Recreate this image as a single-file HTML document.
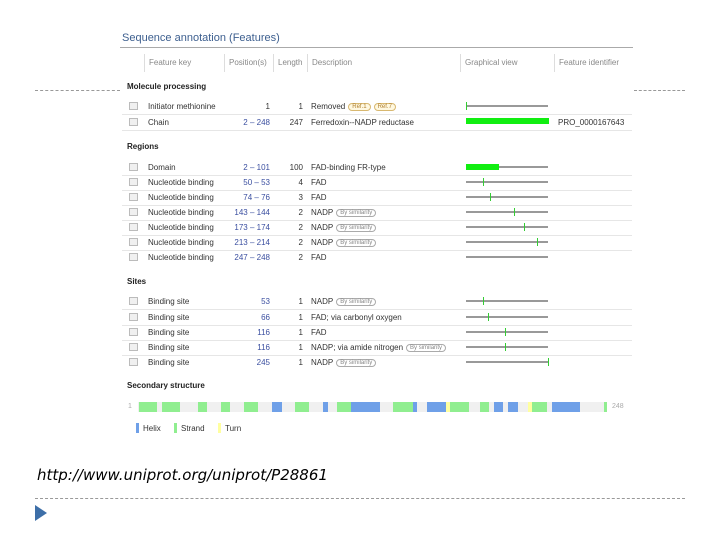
<!DOCTYPE html><html><head><style>
body{margin:0;width:720px;height:540px;background:#fff;position:relative;overflow:hidden;font-family:"Liberation Sans",sans-serif;font-size:8px;color:#333}
div,span{position:absolute;white-space:nowrap}
.t{font-size:11px;color:#3d5f8f;left:122px;top:32px}
.h{color:#888;top:58px}
.sec{font-weight:bold;color:#222;left:127px}
.row{left:122px;width:510px;height:15px;border-bottom:1px solid #e6e6e6}
.cb{left:7px;top:3px;width:7px;height:6px;border:1px solid #bbb;background:#f0f0f0}
.k{left:26px;top:3px}.p{right:362px;top:3px;color:#3b4fa0}.l{right:329px;top:3px}.d{left:189px;top:3px}
.g{left:344px;top:6px;width:82px;height:2px;background:#999}
.m{top:-3px;width:1px;height:8px;background:#3c3}
.sim{position:relative;display:inline-block;font-size:6px;color:#888;border:1px solid #aaa;border-radius:5px;padding:0 3px;margin-left:3px;vertical-align:1px}
.ref{position:relative;display:inline-block;font-size:6px;color:#b08030;border:1px solid #d8b870;background:#fff8e0;border-radius:5px;padding:0 3px;margin-left:3px;vertical-align:1px}
.dash{height:0;border-top:1px dashed #999}
.vl{top:54px;width:1px;height:18px;background:#ddd}
</style></head><body>
<div class="t">Sequence annotation (Features)</div>
<div style="left:120px;top:47px;width:513px;height:1px;background:#aaa"></div>
<div class="vl" style="left:144px"></div><div class="vl" style="left:224px"></div><div class="vl" style="left:273px"></div><div class="vl" style="left:307px"></div><div class="vl" style="left:460px"></div><div class="vl" style="left:554px"></div>
<div class="h" style="left:149px">Feature key</div><div class="h" style="left:229px">Position(s)</div><div class="h" style="left:278px">Length</div><div class="h" style="left:312px">Description</div><div class="h" style="left:465px">Graphical view</div><div class="h" style="left:559px">Feature identifier</div>
<div class="dash" style="left:35px;top:90px;width:85px"></div><div class="dash" style="left:634px;top:90px;width:51px"></div>
<div class="sec" style="top:82px">Molecule processing</div>
<div class="row" style="top:99px"><div class="cb"></div><div class="k">Initiator methionine</div><div class="p" style="color:#333">1</div><div class="l">1</div><div class="d">Removed<span class="ref">Ref.1</span><span class="ref">Ref.7</span></div><div class="g"><div class="m" style="left:0"></div></div></div>
<div class="row" style="top:115px"><div class="cb"></div><div class="k">Chain</div><div class="p">2 – 248</div><div class="l">247</div><div class="d">Ferredoxin--NADP reductase</div><div style="left:344px;top:3px;width:83px;height:6px;background:#1e1"></div><div style="left:436px;top:3px">PRO_0000167643</div></div>
<div class="sec" style="top:142px">Regions</div>
<div class="row" style="top:160px"><div class="cb"></div><div class="k">Domain</div><div class="p">2 – 101</div><div class="l">100</div><div class="d">FAD-binding FR-type</div><div class="g"><div style="left:0;top:-2px;width:33px;height:6px;background:#1e1"></div></div></div>
<div class="row" style="top:175px"><div class="cb"></div><div class="k">Nucleotide binding</div><div class="p">50 – 53</div><div class="l">4</div><div class="d">FAD</div><div class="g"><div class="m" style="left:17px"></div></div></div>
<div class="row" style="top:190px"><div class="cb"></div><div class="k">Nucleotide binding</div><div class="p">74 – 76</div><div class="l">3</div><div class="d">FAD</div><div class="g"><div class="m" style="left:24px"></div></div></div>
<div class="row" style="top:205px"><div class="cb"></div><div class="k">Nucleotide binding</div><div class="p">143 – 144</div><div class="l">2</div><div class="d">NADP<span class="sim">By similarity</span></div><div class="g"><div class="m" style="left:48px"></div></div></div>
<div class="row" style="top:220px"><div class="cb"></div><div class="k">Nucleotide binding</div><div class="p">173 – 174</div><div class="l">2</div><div class="d">NADP<span class="sim">By similarity</span></div><div class="g"><div class="m" style="left:58px"></div></div></div>
<div class="row" style="top:235px"><div class="cb"></div><div class="k">Nucleotide binding</div><div class="p">213 – 214</div><div class="l">2</div><div class="d">NADP<span class="sim">By similarity</span></div><div class="g"><div class="m" style="left:71px"></div></div></div>
<div class="row" style="top:250px;border:0"><div class="cb"></div><div class="k">Nucleotide binding</div><div class="p">247 – 248</div><div class="l">2</div><div class="d">FAD</div><div class="g"></div></div>
<div class="sec" style="top:277px">Sites</div>
<div class="row" style="top:294px"><div class="cb"></div><div class="k">Binding site</div><div class="p">53</div><div class="l">1</div><div class="d">NADP<span class="sim">By similarity</span></div><div class="g"><div class="m" style="left:17px"></div></div></div>
<div class="row" style="top:310px"><div class="cb"></div><div class="k">Binding site</div><div class="p">66</div><div class="l">1</div><div class="d">FAD; via carbonyl oxygen</div><div class="g"><div class="m" style="left:22px"></div></div></div>
<div class="row" style="top:325px"><div class="cb"></div><div class="k">Binding site</div><div class="p">116</div><div class="l">1</div><div class="d">FAD</div><div class="g"><div class="m" style="left:39px"></div></div></div>
<div class="row" style="top:340px"><div class="cb"></div><div class="k">Binding site</div><div class="p">116</div><div class="l">1</div><div class="d">NADP; via amide nitrogen<span class="sim">By similarity</span></div><div class="g"><div class="m" style="left:39px"></div></div></div>
<div class="row" style="top:355px;border:0"><div class="cb"></div><div class="k">Binding site</div><div class="p">245</div><div class="l">1</div><div class="d">NADP<span class="sim">By similarity</span></div><div class="g"><div class="m" style="left:82px"></div></div></div>
<div class="sec" style="top:381px">Secondary structure</div>
<div style="left:128px;top:403px;color:#aaa;font-size:7px">1</div><div style="left:612px;top:403px;color:#aaa;font-size:7px">248</div>
<div style="left:138px;top:402px;width:468px;height:10px;background:#f0f0f0"></div>
<div style="top:402px;height:10px;left:0">
<div style="left:139px;width:18px;height:10px;background:#90ee90"></div><div style="left:162px;width:18px;height:10px;background:#90ee90"></div><div style="left:198px;width:9px;height:10px;background:#90ee90"></div><div style="left:221px;width:9px;height:10px;background:#90ee90"></div><div style="left:244px;width:14px;height:10px;background:#90ee90"></div><div style="left:272px;width:10px;height:10px;background:#6fa0e8"></div><div style="left:295px;width:14px;height:10px;background:#90ee90"></div><div style="left:323px;width:5px;height:10px;background:#6fa0e8"></div><div style="left:337px;width:14px;height:10px;background:#90ee90"></div><div style="left:351px;width:29px;height:10px;background:#6fa0e8"></div><div style="left:393px;width:20px;height:10px;background:#90ee90"></div><div style="left:413px;width:4px;height:10px;background:#6fa0e8"></div><div style="left:427px;width:19px;height:10px;background:#6fa0e8"></div><div style="left:446px;width:4px;height:10px;background:#ffffa0"></div><div style="left:450px;width:19px;height:10px;background:#90ee90"></div><div style="left:480px;width:9px;height:10px;background:#90ee90"></div><div style="left:494px;width:9px;height:10px;background:#6fa0e8"></div><div style="left:508px;width:10px;height:10px;background:#6fa0e8"></div><div style="left:528px;width:4px;height:10px;background:#ffffa0"></div><div style="left:532px;width:15px;height:10px;background:#90ee90"></div><div style="left:552px;width:28px;height:10px;background:#6fa0e8"></div><div style="left:604px;width:3px;height:10px;background:#90ee90"></div>
</div>
<div style="left:136px;top:423px;width:3px;height:10px;background:#6fa0e8"></div><div style="left:143px;top:424px">Helix</div>
<div style="left:174px;top:423px;width:3px;height:10px;background:#90ee90"></div><div style="left:181px;top:424px">Strand</div>
<div style="left:218px;top:423px;width:3px;height:10px;background:#ffffa0"></div><div style="left:225px;top:424px">Turn</div>
<div style="left:37px;top:466px;font-family:'DejaVu Sans',sans-serif;font-size:15px;font-style:italic;color:#000">http://www.uniprot.org/uniprot/P28861</div>
<div class="dash" style="left:35px;top:498px;width:650px"></div>
<div style="left:35px;top:505px;width:0;height:0;border-top:8px solid transparent;border-bottom:8px solid transparent;border-left:12px solid #3d6fa8"></div>
</body></html>
